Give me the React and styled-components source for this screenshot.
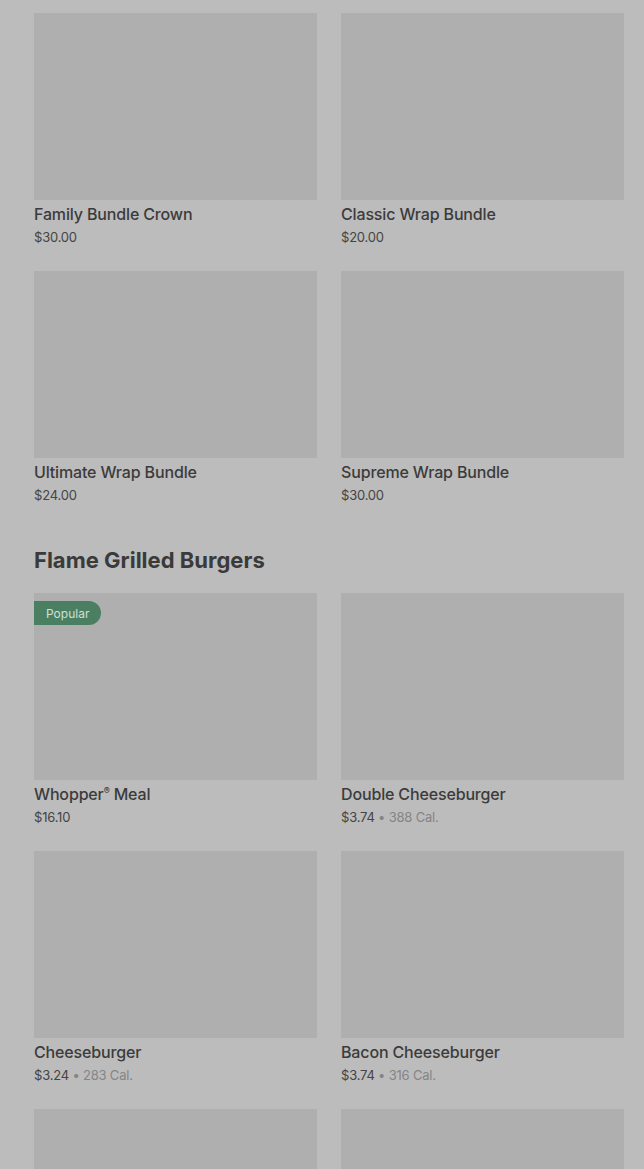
import React from 'react';
import styled, { createGlobalStyle } from 'styled-components';

const GlobalStyle = createGlobalStyle`
  html, body {
    margin: 0;
    padding: 0;
    background: #bcbcbc;
  }
  body {
    font-family: Inter, "Noto Sans", "Liberation Sans", sans-serif;
  }
`;

const Page = styled.div`
  padding: 13px 20px 0 34px;
  height: 1169px;
  overflow: hidden;
  box-sizing: border-box;
  background: #bcbcbc;
`;

const Grid = styled.div`
  display: grid;
  grid-template-columns: 283px 283px;
  column-gap: 24px;
  row-gap: 24px;
`;

const SectionTitle = styled.h2`
  margin: 41px 0 19px 0;
  font-size: 22px;
  line-height: 28px;
  font-weight: 700;
  letter-spacing: 0;
  color: #3a3a3a;
`;

const Card = styled.div`
  display: flex;
  flex-direction: column;
`;

const Thumb = styled.div`
  position: relative;
  height: 187px;
  background: #afafaf;
`;

const Badge = styled.span`
  position: absolute;
  top: 8px;
  left: 0;
  height: 24px;
  padding: 0 12px;
  display: flex;
  align-items: center;
  background: #4b7f62;
  color: #cfe0d5;
  font-size: 12px;
  border-radius: 0 12px 12px 0;
`;

const Name = styled.div`
  margin-top: 4px;
  font-size: 16px;
  line-height: 20px;
  font-weight: 500;
  letter-spacing: -0.15px;
  color: #3b3b3b;

  & sup {
    font-size: 9px;
    line-height: 0;
    vertical-align: 6px;
  }
`;

const Meta = styled.div`
  margin-top: 3px;
  font-size: 13px;
  line-height: 20px;
  color: #444;
  letter-spacing: -0.2px;
`;

const Cal = styled.span`
  color: #858585;
`;

const bundles = [
  { name: 'Family Bundle Crown', price: '$30.00' },
  { name: 'Classic Wrap Bundle', price: '$20.00' },
  { name: 'Ultimate Wrap Bundle', price: '$24.00' },
  { name: 'Supreme Wrap Bundle', price: '$30.00' },
];

const burgers = [
  { name: 'Whopper', reg: true, suffix: ' Meal', price: '$16.10', popular: true },
  { name: 'Double Cheeseburger', price: '$3.74', cal: '388 Cal.' },
  { name: 'Cheeseburger', price: '$3.24', cal: '283 Cal.' },
  { name: 'Bacon Cheeseburger', price: '$3.74', cal: '316 Cal.' },
  { name: '', price: '' },
  { name: '', price: '' },
];

const Item = ({ item }) => (
  <Card>
    <Thumb>{item.popular && <Badge>Popular</Badge>}</Thumb>
    <Name>
      {item.name}
      {item.reg && <sup>®</sup>}
      {item.suffix}
    </Name>
    <Meta>
      {item.price}
      {item.cal && <Cal> • {item.cal}</Cal>}
    </Meta>
  </Card>
);

export default function App() {
  return (
    <Page>
      <GlobalStyle />
      <Grid>
        {bundles.map((b, i) => <Item key={i} item={b} />)}
      </Grid>
      <SectionTitle>Flame Grilled Burgers</SectionTitle>
      <Grid>
        {burgers.map((b, i) => <Item key={i} item={b} />)}
      </Grid>
    </Page>
  );
}
